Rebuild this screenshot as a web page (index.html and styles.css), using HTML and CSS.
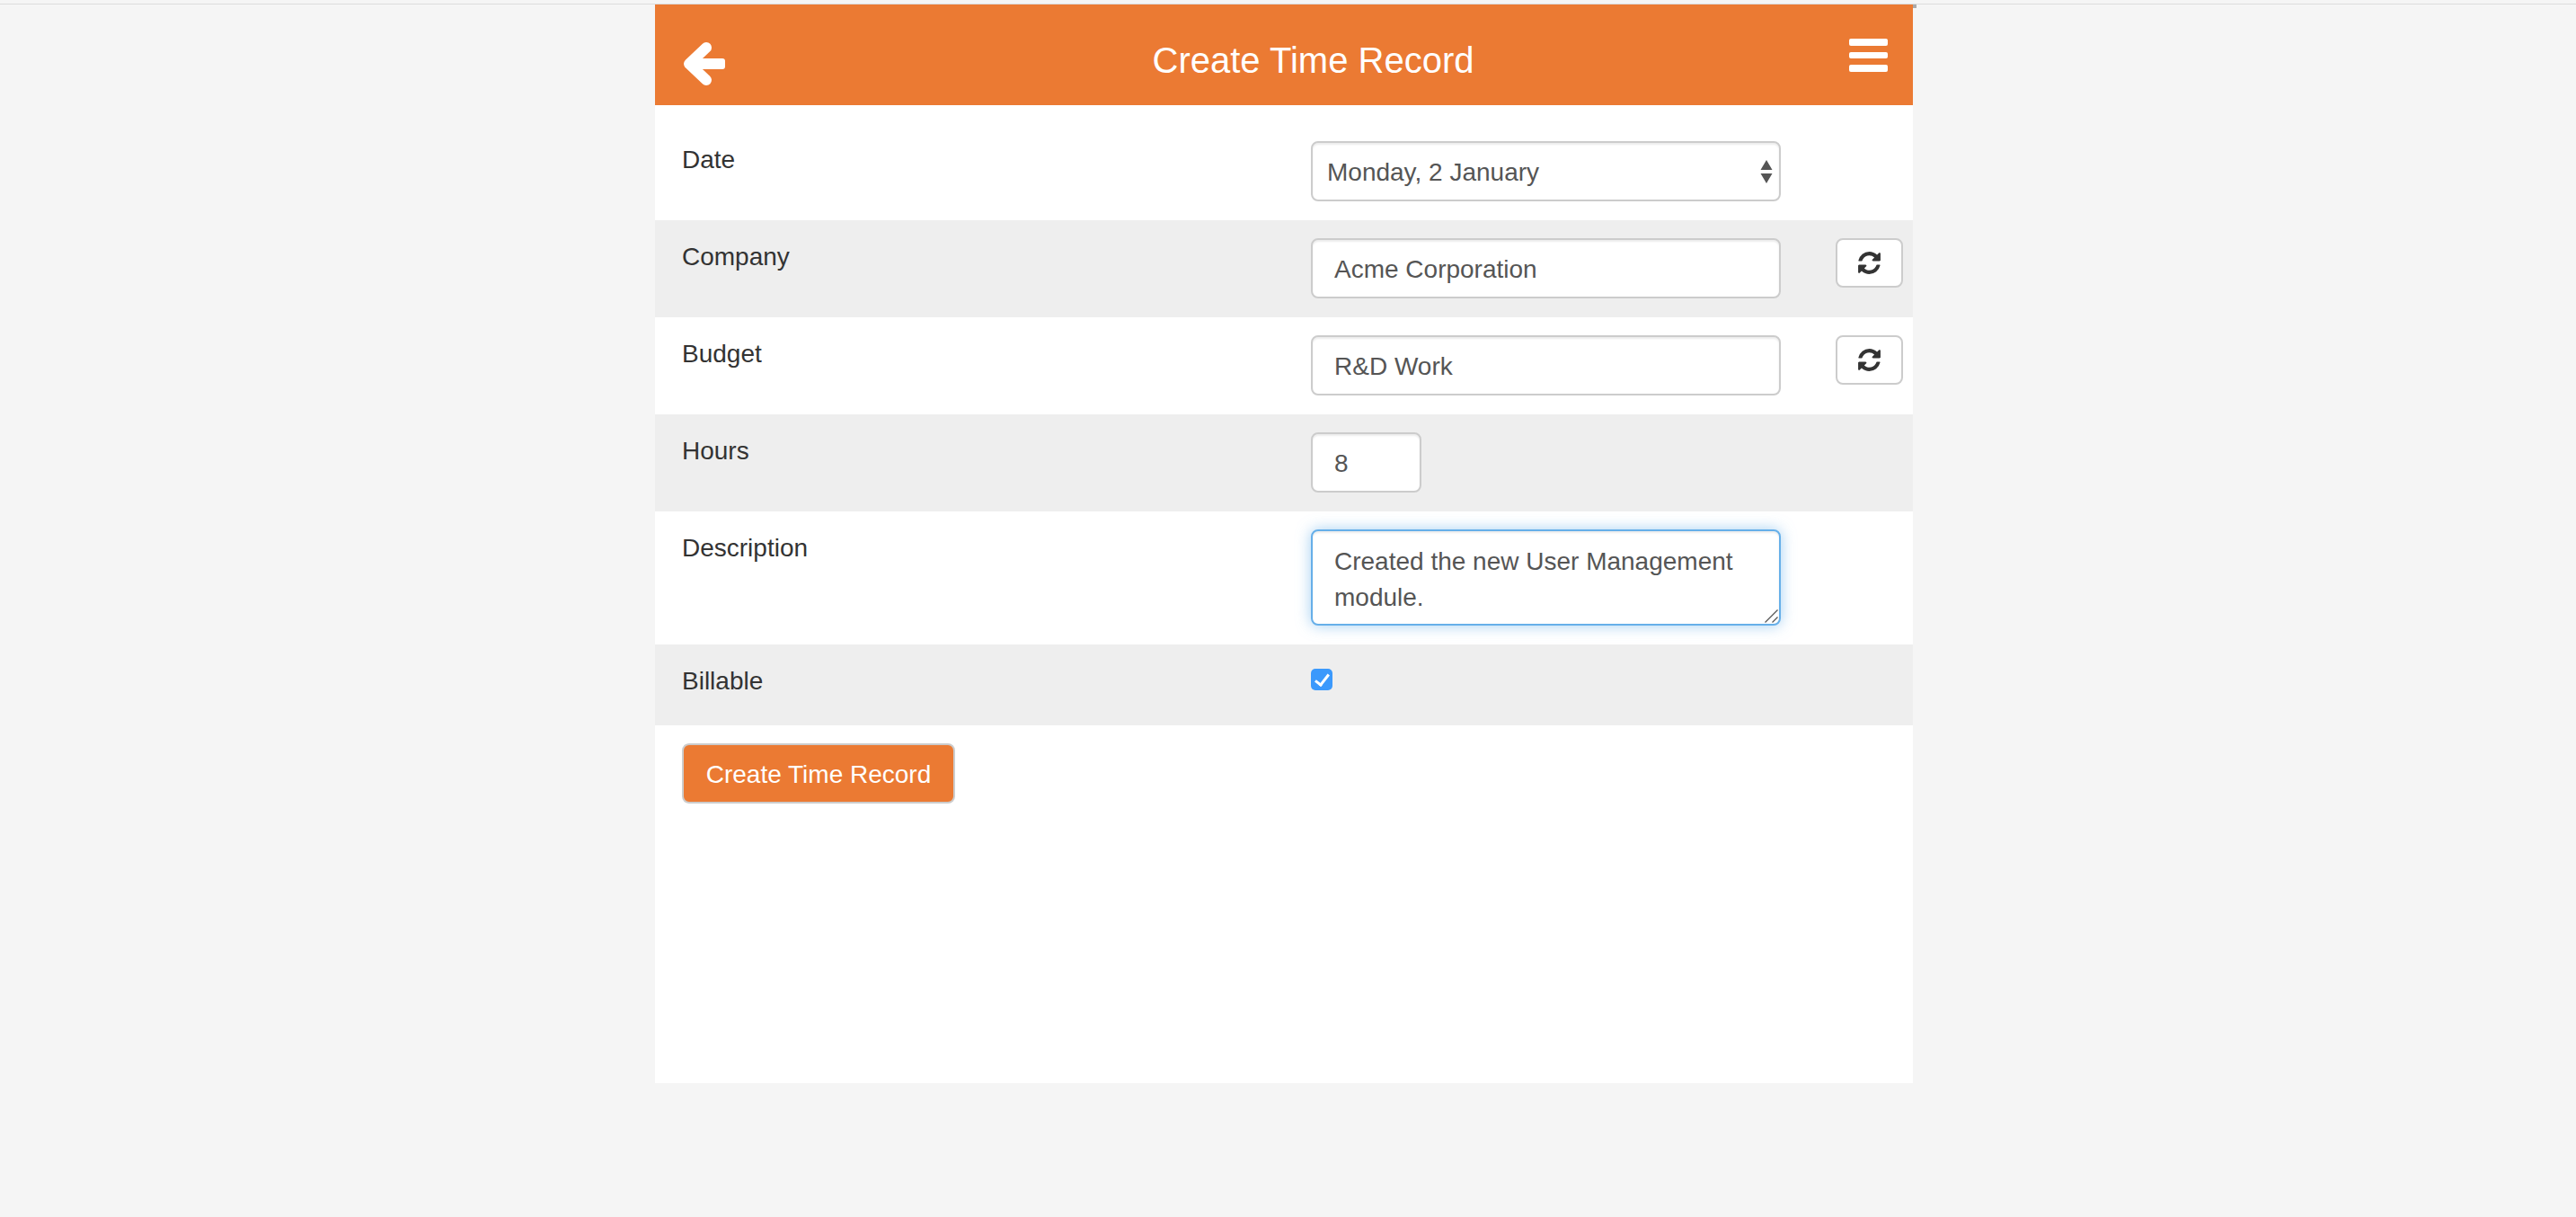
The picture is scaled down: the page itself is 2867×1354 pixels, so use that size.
FILE: index.html
```html
<!DOCTYPE html>
<html lang="en">
    <head>
        <meta charset="UTF-8">
        <meta name="viewport" content="width=device-width, initial-scale=1.0">
        <link rel="stylesheet" href="styles.css">
        <title>Create Time Record</title>
    </head>
    <body>
        <div class="top-line"></div>
        <div class="panel">
            <div class="header">
                <a class="back-link" href="#">
                    <svg width="46" height="48" viewBox="0 0 46 48">
                        <path d="M25 6 L6 24 L25 42" fill="none" stroke="#fff" stroke-width="12" stroke-linecap="round" stroke-linejoin="round"/>
                        <rect x="6" y="18" width="40" height="12" rx="3" fill="#fff"/>
                    </svg>
                </a>
                <h1>Create Time Record</h1>
                <a class="menu-link" href="#">
                    <span></span>
                    <span></span>
                    <span></span>
                </a>
            </div>

            <form>
                <div class="row first">
                    <label class="row-label" for="date">Date</label>
                    <div class="row-field">
                        <div class="select-wrap">
                            <select id="date" class="control">
                                <option>Monday, 2 January</option>
                            </select>
                            <svg class="select-arrows" width="14" height="26" viewBox="0 0 14 26">
                                <path d="M7 0 L13.5 11 H0.5 Z M0.5 15 H13.5 L7 26 Z" fill="#555"/>
                            </svg>
                        </div>
                    </div>
                </div>

                <div class="row shaded">
                    <label class="row-label" for="company">Company</label>
                    <div class="row-field">
                        <input type="text" id="company" class="control" value="Acme Corporation">
                        <button type="button" class="sync-btn">
                            <svg width="29" height="29" viewBox="0 0 1792 1792"><path fill="#333" d="M1639 1056q0 5-1 7-64 268-268 434.5t-478 166.5q-146 0-282.5-55t-243.5-157l-129 129q-19 19-45 19t-45-19-19-45v-448q0-26 19-45t45-19h448q26 0 45 19t19 45-19 45l-137 137q71 66 161 102t187 36q134 0 250-65t186-179q11-17 53-117 8-23 30-23h192q13 0 22.5 9.5t9.5 22.5zm25-800v448q0 26-19 45t-45 19h-448q-26 0-45-19t-19-45 19-45l138-138q-148-137-349-137-134 0-250 65t-186 179q-11 17-53 117-8 23-30 23h-199q-13 0-22.5-9.5t-9.5-22.5v-7q65-268 270-434.5t480-166.5q146 0 284 55.5t245 156.5l130-129q19-19 45-19t45 19 19 45z"/></svg>
                        </button>
                    </div>
                </div>

                <div class="row">
                    <label class="row-label" for="budget">Budget</label>
                    <div class="row-field">
                        <input type="text" id="budget" class="control" value="R&amp;D Work">
                        <button type="button" class="sync-btn">
                            <svg width="29" height="29" viewBox="0 0 1792 1792"><path fill="#333" d="M1639 1056q0 5-1 7-64 268-268 434.5t-478 166.5q-146 0-282.5-55t-243.5-157l-129 129q-19 19-45 19t-45-19-19-45v-448q0-26 19-45t45-19h448q26 0 45 19t19 45-19 45l-137 137q71 66 161 102t187 36q134 0 250-65t186-179q11-17 53-117 8-23 30-23h192q13 0 22.5 9.5t9.5 22.5zm25-800v448q0 26-19 45t-45 19h-448q-26 0-45-19t-19-45 19-45l138-138q-148-137-349-137-134 0-250 65t-186 179q-11 17-53 117-8 23-30 23h-199q-13 0-22.5-9.5t-9.5-22.5v-7q65-268 270-434.5t480-166.5q146 0 284 55.5t245 156.5l130-129q19-19 45-19t45 19 19 45z"/></svg>
                        </button>
                    </div>
                </div>

                <div class="row shaded">
                    <label class="row-label" for="hours">Hours</label>
                    <div class="row-field">
                        <input type="text" id="hours" class="control hours" value="8">
                    </div>
                </div>

                <div class="row">
                    <label class="row-label" for="description">Description</label>
                    <div class="row-field">
                        <div class="textarea-wrap">
                            <textarea id="description" class="control focused">Created the new User Management module.</textarea>
                            <svg class="resize-grip" width="15" height="15" viewBox="0 0 15 15">
                                <path d="M0.5 14.5 L14.5 0.5 M8.5 14.5 L14.5 8.5" fill="none" stroke="#555" stroke-width="1.3"/>
                            </svg>
                        </div>
                    </div>
                </div>

                <div class="row shaded billable">
                    <label class="row-label" for="billable">Billable</label>
                    <div class="row-field">
                        <input type="checkbox" id="billable" checked>
                    </div>
                </div>

                <div class="actions">
                    <button type="submit" class="submit-btn">Create Time Record</button>
                </div>
            </form>
            <div class="corner-nub"></div>
        </div>
    </body>
</html>
```

FILE: styles.css
```css
body {
    font-family: "Liberation Sans", Arial, Helvetica, sans-serif;
    font-size: 28px;
    line-height: 40px;
    color: #333;
    background-color: #f5f5f5;
    margin: 0;
    height: 1354px;
}

.top-line {
    height: 4px;
    border-bottom: 1px solid #dcdcdc;
}

.panel {
    position: relative;
    width: 1400px;
    height: 1200px;
    margin-left: 729px;
    background-color: #fff;
}

.corner-nub {
    position: absolute;
    top: 0;
    right: -4px;
    width: 4px;
    height: 4px;
    background-color: #aaa;
}

.header {
    display: flex;
    align-items: flex-start;
    height: 112px;
    padding: 0 28px 0 32px;
    background-color: #eb7a33;
}

.back-link {
    display: block;
    height: 48px;
    margin-top: 42px;
}

.header h1 {
    flex: 1;
    margin: 40px 0 0;
    padding-left: 58px;
    color: white;
    font-size: 40px;
    font-weight: normal;
    line-height: 44px;
    text-align: center;
}

.menu-link {
    display: flex;
    flex-direction: column;
    gap: 7px;
    width: 43px;
    margin-top: 38px;
}

.menu-link span {
    height: 7.5px;
    border-radius: 2px;
    background-color: #fff;
}

.row {
    display: flex;
    padding: 20px 0 21px 30px;
}

.row.first {
    padding-top: 40px;
}

.row.shaded {
    background-color: #eee;
}

.row-label {
    width: 700px;
    padding-top: 1px;
}

.row-field {
    display: flex;
    align-items: flex-start;
}

.control {
    display: block;
    box-sizing: border-box;
    width: 523px;
    height: 67px;
    padding: 14px 24px 12px;
    border: 2px solid #ccc;
    border-radius: 8px;
    background-color: #fff;
    color: #555;
    font: inherit;
    box-shadow: inset 0 2px 2px rgba(0, 0, 0, 0.075);
    outline: none;
}

.control.hours {
    width: 123px;
}

.control.focused {
    height: 107px;
    padding-top: 14px;
    border-color: #66afe9;
    line-height: 40px;
    box-shadow: inset 0 2px 2px rgba(0, 0, 0, 0.075), 0 0 16px rgba(102, 175, 233, 0.6);
    resize: none;
}

.textarea-wrap {
    position: relative;
}

.resize-grip {
    position: absolute;
    right: 3px;
    bottom: 3px;
}

.select-wrap {
    position: relative;
}

.select-wrap select {
    appearance: none;
    padding: 13px 40px 13px 16px;
}

.select-arrows {
    position: absolute;
    top: 21px;
    right: 9px;
}

.sync-btn {
    display: flex;
    align-items: center;
    justify-content: center;
    box-sizing: border-box;
    width: 75px;
    height: 55px;
    margin-left: 61px;
    padding: 0;
    border: 2px solid #ccc;
    border-radius: 8px;
    background-color: #fff;
}

.row.billable {
    height: 90px;
    box-sizing: border-box;
}

#billable {
    appearance: none;
    position: relative;
    width: 24px;
    height: 24px;
    margin: 7px 0 0;
    border-radius: 5px;
    background-color: #3b99fc;
}

/* white tick on top of the blue box */
#billable::after {
    content: "";
    position: absolute;
    left: 8px;
    top: 3px;
    width: 6px;
    height: 13px;
    border: solid #fff;
    border-width: 0 3px 3px 0;
    transform: rotate(38deg);
}

.actions {
    padding: 20px 0 0 30px;
}

.submit-btn {
    box-sizing: border-box;
    width: 304px;
    height: 67px;
    padding: 2px 0 0;
    border: 2px solid #ccc;
    border-radius: 8px;
    background-color: #eb7a33;
    color: white;
    font: inherit;
    cursor: pointer;
}
```
